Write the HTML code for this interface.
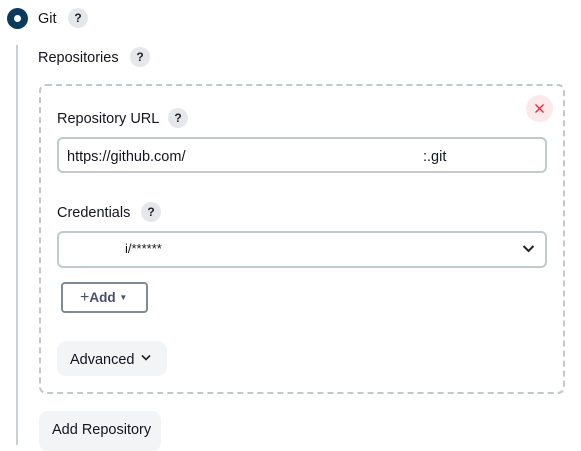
<!DOCTYPE html>
<html><head><style>
*{box-sizing:border-box;margin:0;padding:0}
body{width:581px;height:438px;overflow:hidden;background:#fff;font-family:"Liberation Sans",Arial,sans-serif;color:#14141f;font-size:14px;position:relative}
.a{position:absolute}
.help{position:absolute;width:20px;height:20px;border-radius:50%;background:#e6e7ea;font-size:12px;font-weight:bold;text-align:center;line-height:20px;color:#222}
.lbl{position:absolute;font-size:14.5px;line-height:18px}
.inp{position:absolute;border:2px solid #c2c9cc;border-radius:6px;background:#fff}
</style></head><body>
<div class="a" style="left:7px;top:8px;width:21px;height:21px;border-radius:50%;background:#0b3b5c"></div>
<div class="a" style="left:14px;top:15px;width:7px;height:7px;border-radius:50%;background:#fff"></div>
<div class="lbl" style="left:38px;top:10px">Git</div>
<div class="help" style="left:68px;top:8px">?</div>
<div class="a" style="left:16px;top:45px;width:2px;height:400px;background:#c9ced3"></div>
<div class="lbl" style="left:38px;top:49px">Repositories</div>
<div class="help" style="left:130px;top:47px">?</div>
<div class="a" style="left:39px;top:84px;width:526px;height:310px;border:2px dashed #c2c8cc;border-radius:7px"></div>
<div class="a" style="left:526px;top:95px;width:27px;height:27px;border-radius:50%;background:#fde8ea"></div>
<svg class="a" style="left:535px;top:104px" width="9" height="9" viewBox="0 0 9 9"><path d="M0.5 0.5L8.5 8.5M8.5 0.5L0.5 8.5" stroke="#e8283f" stroke-width="1.3"/></svg>
<div class="lbl" style="left:57px;top:110px">Repository URL</div>
<div class="help" style="left:168px;top:108px">?</div>
<div class="inp" style="left:57px;top:137px;width:490px;height:36px"></div>
<div class="lbl" style="left:67px;top:148px">https://github.com/</div>
<div class="lbl" style="left:423px;top:148px">:.git</div>
<div class="lbl" style="left:57px;top:204px">Credentials</div>
<div class="help" style="left:141px;top:202px">?</div>
<div class="inp" style="left:57px;top:231px;width:490px;height:37px"></div>
<div class="lbl" style="left:125px;top:240px;font-size:13px">i/******</div>
<svg class="a" style="left:522px;top:244px" width="13" height="9" viewBox="0 0 13 9"><path d="M1.5 2L6.5 7L11.5 2" stroke="#222" stroke-width="2" fill="none"/></svg>
<div class="a" style="left:61px;top:282px;width:87px;height:31px;border:2px solid #7f8b92;border-radius:4px"></div>
<div class="lbl" style="left:80px;top:289px;color:#4b4e6b;font-weight:bold;font-size:13.5px"><span style="font-weight:normal;font-size:16px">+</span>Add <span style="font-size:8px;vertical-align:2px">▼</span></div>
<div class="a" style="left:57px;top:341px;width:110px;height:35px;border-radius:9px;background:#f3f4f6"></div>
<div class="lbl" style="left:70px;top:351px">Advanced</div>
<svg class="a" style="left:141px;top:354px" width="10" height="7" viewBox="0 0 10 7"><path d="M1 1.5L5 5.5L9 1.5" stroke="#222" stroke-width="1.6" fill="none"/></svg>
<div class="a" style="left:39px;top:411px;width:122px;height:40px;border-radius:9px;background:#f3f4f6"></div>
<div class="lbl" style="left:52px;top:421px">Add Repository</div>
</body></html>
